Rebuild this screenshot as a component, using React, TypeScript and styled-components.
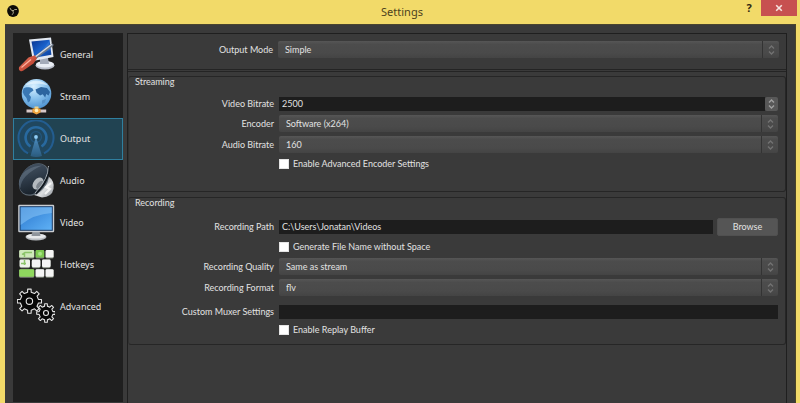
import React from "react";
import styled, { createGlobalStyle } from "styled-components";

const GlobalStyle = createGlobalStyle`
  * { box-sizing: border-box; }
  body { margin: 0; background: #f2da69; }
  button, input, select { font: inherit; color: inherit; margin: 0; }
`;

const Window = styled.div`
  display: flex;
  flex-direction: column;
  min-height: 100vh;
  background: #f2da69;
  color: #e2e2e2;
  font: 9px/14px Lato, "Noto Sans", sans-serif;
`;

const TitleBar = styled.header`
  display: grid;
  grid-template-columns: 1fr auto 1fr;
  height: 24px;
  padding: 0 3px 0 7px;
  color: #4d421d;
  font-family: "Noto Sans", sans-serif;
`;

const AppMark = styled.svg`
  width: 12px;
  height: 12px;
  margin-top: 5px;
`;

const Title = styled.h1`
  margin: 0;
  font-size: 11px;
  line-height: 24px;
  font-weight: 400;
`;

const WindowControls = styled.div`
  display: flex;
  justify-content: flex-end;
  align-items: flex-start;
`;

const HelpButton = styled.button`
  width: 24px;
  height: 16px;
  padding: 0;
  border: 0;
  background: none;
  color: #2f2811;
  font-size: 11px;
  line-height: 16px;
  font-weight: 700;
`;

const CloseButton = styled.button`
  display: flex;
  align-items: center;
  justify-content: center;
  width: 36px;
  height: 16px;
  padding: 0;
  border: 0;
  background: #c75050;
`;

const Body = styled.div`
  flex: 1;
  display: flex;
  gap: 4px;
  margin: 0 4px 0 5px;
  padding: 8px 8px 0;
  background: #3a3a3a;
  border-top: 1px solid #4a452f;
  border-right: 1px solid #4a4326;
`;

const Sidebar = styled.nav`
  width: 110px;
  margin-bottom: 1px;
  padding-top: 1px;
  background: #1f1f1f;
  font-family: "Noto Sans", sans-serif;
`;

const NavItem = styled.button<{ $active?: boolean }>`
  display: flex;
  align-items: center;
  gap: 5px;
  width: 100%;
  height: 42px;
  padding: 0 3px;
  border: 1px solid ${(p) => (p.$active ? "#2f7f9f" : "transparent")};
  background: ${(p) => (p.$active ? "#214352" : "none")};
  text-align: left;
`;

const NavIcon = styled.svg`
  flex: none;
  width: 38px;
  height: 38px;
`;

const Pane = styled.main`
  flex: 1;
  min-width: 0;
  border: 1px solid #1f1f1f;
  border-bottom: 0;
`;

const ModeBar = styled.section`
  padding: 7px 7px 11px 0;
  border-bottom: 3px double #242424;
`;

const Group = styled.fieldset<{ $tail: number }>`
  display: flex;
  flex-direction: column;
  gap: 4px;
  min-width: 0;
  margin: 5px 0 0;
  padding: 0 7px ${(p) => p.$tail}px 0;
  border: 1px solid #262626;
  border-left-color: #303030;
  border-radius: 3px;

  ${ModeBar} + & {
    margin-top: 4px;
  }

  & > legend {
    float: left;
    width: 100%;
    padding: 0 6px;
    margin-bottom: 6px;
    line-height: 10px;
  }
`;

const Row = styled.div<{ $spaced?: boolean }>`
  display: grid;
  grid-template-columns: 145px minmax(0, 1fr);
  align-items: center;
  column-gap: 5px;
  margin-top: ${(p) => (p.$spaced ? 5 : 0)}px;
`;

const Label = styled.label`
  text-align: right;
  white-space: nowrap;
`;

const Field = styled.div`
  display: flex;
  align-items: center;
  gap: 4px;
`;

const TextBox = styled.input`
  flex: 1;
  min-width: 0;
  height: 14px;
  padding: 0 3px;
  border: 0;
  background: #1d1d1d;
  outline: 0;
`;

const SelectFrame = styled.div`
  flex: 1;
  display: grid;
  height: 17px;
  border-radius: 2px;
  background: linear-gradient(#565656, #4c4c4c 20%, #4a4a4a 70%, #444444);

  & > * { grid-area: 1 / 1; }
`;

const Select = styled.select`
  appearance: none;
  width: 100%;
  height: 17px;
  padding: 0 20px 0 7px;
  border: 0;
  background: none;
  outline: 0;
`;

const SelectArrows = styled.span`
  display: flex;
  align-items: center;
  justify-content: center;
  justify-self: end;
  width: 17px;
  border-left: 1px solid #333333;
  pointer-events: none;
`;

const SpinButton = styled.button`
  display: flex;
  align-items: center;
  justify-content: center;
  width: 13px;
  height: 14px;
  padding: 0;
  border: 0;
  border-radius: 2px;
  background: #585858;
`;

const SpinField = styled(Field)`
  gap: 0;
`;

const BrowseButton = styled.button`
  width: 61px;
  height: 18px;
  padding: 0;
  border: 1px solid #505050;
  border-radius: 2px;
  background: #555555;
  line-height: 14px;
`;

const CheckLabel = styled.label`
  grid-column: 2;
  display: flex;
  align-items: center;
  gap: 4px;
  height: 14px;
`;

const CheckBox = styled.input`
  appearance: none;
  width: 10px;
  height: 10px;
  border: 1px solid #e4e4e4;
  background: #ffffff;

  &:checked { background: #2f7f9f; }
`;

function Arrows({ color }: { color: string }) {
  return (
    <svg width="7" height="12" viewBox="0 0 7 12" fill="none" stroke={color} strokeWidth="1.4">
      <path d="M1 4.5 3.5 2 6 4.5M1 7.5 3.5 10 6 7.5" />
    </svg>
  );
}

function SelectRow({ id, label, options }: { id: string; label: string; options: string[] }) {
  return (
    <Row>
      <Label htmlFor={id}>{label}</Label>
      <SelectFrame>
        <Select id={id} defaultValue={options[0]}>
          {options.map((o) => (
            <option key={o}>{o}</option>
          ))}
        </Select>
        <SelectArrows>
          <Arrows color="#727272" />
        </SelectArrows>
      </SelectFrame>
    </Row>
  );
}

function CheckRow({ label }: { label: string }) {
  return (
    <Row>
      <CheckLabel>
        <CheckBox type="checkbox" />
        {label}
      </CheckLabel>
    </Row>
  );
}

function GeneralIcon() {
  return (
    <NavIcon viewBox="0 0 38 38">
      <defs>
        <linearGradient id="gScreen" x1="0" y1="0" x2="1" y2="1">
          <stop offset="0" stopColor="#0a3490" />
          <stop offset=".5" stopColor="#1a62cc" />
          <stop offset="1" stopColor="#0b3c96" />
        </linearGradient>
        <linearGradient id="gHandle" x1="0" y1="0" x2="1" y2="1">
          <stop offset="0" stopColor="#f0806a" />
          <stop offset="1" stopColor="#a82a18" />
        </linearGradient>
      </defs>
      <ellipse cx="28" cy="29.5" rx="9.5" ry="4" fill="#b9bec9" />
      <ellipse cx="28" cy="28.3" rx="9" ry="3.2" fill="#e9edf4" />
      <path d="M23 22h8l1 6h-9z" fill="#a4abb9" />
      <path d="M12 3.5 34 1.5 36.5 21 16 25z" fill="#e3e9f2" />
      <path d="M14.5 5.5 32.5 3.7 34.4 18.7 17.5 21.8z" fill="url(#gScreen)" />
      <path d="M22 18 32 5.5 33.5 14z" fill="#4e95ea" opacity=".35" />
      <path d="M35 9 18.5 21.5" stroke="#6e7989" strokeWidth="3" strokeLinecap="round" />
      <path d="M34.5 8.6 18 21" stroke="#d7dde6" strokeWidth="1.3" strokeLinecap="round" />
      <path d="M2.2 31C1 33.5 3.2 36.4 6 34.8L16.5 27.5 20 22.5 17.8 19.2 11.5 21.5z" fill="url(#gHandle)" />
      <path d="M4.5 31.5 14 23.5" stroke="#ffb29f" strokeWidth="1.2" />
    </NavIcon>
  );
}

function StreamIcon() {
  return (
    <NavIcon viewBox="0 0 38 38">
      <defs>
        <radialGradient id="sGlobe" cx=".4" cy=".25" r=".8">
          <stop offset="0" stopColor="#d9f0ff" />
          <stop offset=".5" stopColor="#8cc4ee" />
          <stop offset="1" stopColor="#4a90cf" />
        </radialGradient>
      </defs>
      <circle cx="19.5" cy="15.7" r="14.8" fill="url(#sGlobe)" />
      <path d="M6.5 10.5C9 8.6 13 9 15.5 10.5L16.5 12.5l-3 2-1.5 2 2 2.5-1 4-2 1.5-1.5-4.5-2.5-3-1.4-3z" fill="#3a78b4" />
      <path d="M18.5 11.5 24 9l6 1 3 4-1.4 3.4-2.4-1.4-1 3.5-2.5-3.2-2.6 1.2-3.5-2.8z" fill="#2c659f" />
      <path d="M25 22.5 29 21l-1 3.6-3 1.4z" fill="#5590c6" />
      <path d="M8 7.5C13 1 26 1 31 7.5 24 5 15 5 8 7.5Z" fill="#f2faff" opacity=".6" />
      <path d="M17.5 28.5h4v4h-4z" fill="#ecd28b" />
      <path d="M9.5 31.4h6.2v3H9.5zM23.2 31.4h6v3h-6z" fill="#d8c8c8" />
      <path d="M15.5 30.6h8v4l-4 2-4-2z" fill="#f1a53f" />
      <circle cx="19.5" cy="32.5" r="1.8" fill="#fff1b8" />
    </NavIcon>
  );
}

function OutputIcon() {
  return (
    <NavIcon viewBox="0 0 38 38" fill="none">
      <defs>
        <linearGradient id="oCone" x1="0" y1="0" x2="0" y2="1">
          <stop offset="0" stopColor="#5aa0d8" />
          <stop offset="1" stopColor="#2f6590" />
        </linearGradient>
      </defs>
      <circle cx="19" cy="17.5" r="17" fill="#1f4f78" fillOpacity=".35" />
      <path d="M11 33.4A17.5 17.5 0 1 1 27 33.4" stroke="#235d90" strokeWidth="2" />
      <path d="M13.5 26.5A10.4 10.4 0 1 1 24.5 26.5" stroke="#28699f" strokeWidth="2.6" />
      <circle cx="19" cy="17" r="5.4" stroke="#22577f" strokeWidth="1.2" />
      <path d="M18.3 19h1.4L25 36Q19 38 13.5 36z" fill="url(#oCone)" opacity=".7" />
      <circle cx="19" cy="17" r="1.9" fill="#8fcdf6" />
    </NavIcon>
  );
}

function AudioIcon() {
  return (
    <NavIcon viewBox="0 0 38 38">
      <defs>
        <linearGradient id="aCone" x1="0" y1="0" x2="1" y2="1">
          <stop offset="0" stopColor="#4a5868" />
          <stop offset=".45" stopColor="#2f3c4a" />
          <stop offset="1" stopColor="#11181f" />
        </linearGradient>
        <linearGradient id="aBase" x1="0" y1="0" x2="1" y2="1">
          <stop offset="0" stopColor="#777f88" />
          <stop offset=".6" stopColor="#dcdee0" />
          <stop offset="1" stopColor="#858b92" />
        </linearGradient>
      </defs>
      <path d="M31 14Q38 19 36.5 27T25 35.5L17 33 22 21z" fill="url(#aBase)" />
      <ellipse cx="17" cy="17.5" rx="13" ry="18" transform="rotate(38 17 17.5)" fill="#5c6771" />
      <ellipse cx="16.4" cy="17" rx="12.2" ry="17.2" transform="rotate(38 16.4 17)" fill="url(#aCone)" />
      <path d="M3.5 26Q4 13 25 3.5 8 5 3 16 .5 22 3.5 26Z" fill="#8797a8" opacity=".35" />
      <ellipse cx="21" cy="21.5" rx="4.6" ry="6.8" transform="rotate(38 21 21.5)" fill="#b4babf" />
      <ellipse cx="23" cy="23" rx="2.8" ry="4.8" transform="rotate(38 23 23)" fill="#7d858d" />
      <path d="M31.5 4Q32 16 18 31" fill="none" stroke="#aab2ba" strokeWidth="1" />
      <path d="M32.4 5Q33 17 19 32" fill="none" stroke="#10161c" strokeWidth="1.6" />
      <path d="M34 21 29 25l4 2-5 5" fill="none" stroke="#ffffff" strokeWidth="2.2" opacity=".75" />
    </NavIcon>
  );
}

function VideoIcon() {
  return (
    <NavIcon viewBox="0 0 38 38">
      <defs>
        <linearGradient id="vScreen" x1="0" y1="0" x2="1" y2="1">
          <stop offset="0" stopColor="#2a77cf" />
          <stop offset="1" stopColor="#5fb1f5" />
        </linearGradient>
      </defs>
      <ellipse cx="19" cy="33" rx="10.5" ry="3.4" fill="#b8bcc1" />
      <ellipse cx="19" cy="32.2" rx="9.5" ry="2.4" fill="#e6e8ea" />
      <path d="M15.5 27h7l1 5h-9z" fill="#8e949b" />
      <rect x="1.2" y=".8" width="36" height="27.4" rx="1.2" fill="#c9ccd0" />
      <rect x="2.6" y="2.2" width="33.2" height="24.6" fill="#173b66" />
      <rect x="3.6" y="3.2" width="31.2" height="22.6" fill="url(#vScreen)" />
      <path d="M3.6 3.2h31.2V9Q17 10 3.6 21z" fill="#8fcaf8" opacity=".5" />
    </NavIcon>
  );
}

function HotkeysIcon() {
  const keys: [number, number, number, string][] = [
    [2.2, 4, 15, "#cfe9bb"], [18.6, 4, 8.6, "#7cc850"], [28.6, 4, 8, "#f4f4f4"],
    [2.6, 13.6, 10.4, "#eef3ea"], [14.8, 13.6, 8.6, "#f4f4f4"], [25, 13.6, 8.6, "#f4f4f4"],
    [2.2, 23.2, 15, "#8fd85e"], [18.6, 23.2, 8.6, "#f4f4f4"], [28.6, 23.2, 8, "#f4f4f4"],
  ];
  return (
    <NavIcon viewBox="0 0 38 38">
      {keys.map(([x, y, w, fill]) => (
        <g key={`${x}-${y}`}>
          <rect x={x} y={y} width={w} height="8.6" rx="1.4" fill="#7d8478" />
          <rect x={x} y={y} width={w} height="7.6" rx="1.4" fill={fill} />
        </g>
      ))}
      <path d="M5 8.5 8 6.5h7M7.5 11V7.5M7.5 14v5M4 17.5h5" fill="none" stroke="#8cc56a" strokeWidth="1.5" />
      <circle cx="23" cy="7.8" r="2" fill="#a7e584" />
    </NavIcon>
  );
}

function gearPath(cx: number, cy: number, outer: number, inner: number, teeth: number) {
  const step = (Math.PI * 2) / teeth;
  const points: string[] = [];
  for (let i = 0; i < teeth; i++) {
    const a = i * step - Math.PI / 2;
    for (const [r, d] of [[inner, -0.25], [outer, -0.18], [outer, 0.18], [inner, 0.25]]) {
      points.push(`${(cx + r * Math.cos(a + d * step)).toFixed(2)} ${(cy + r * Math.sin(a + d * step)).toFixed(2)}`);
    }
  }
  return `M${points.join("L")}Z`;
}

function AdvancedIcon() {
  return (
    <NavIcon viewBox="0 0 38 38" fill="#080808" stroke="#e6e6e6" strokeWidth="1.1" strokeLinejoin="round">
      <path d={gearPath(12.4, 13.2, 12.2, 9.2, 8)} />
      <circle cx="12.4" cy="13.2" r="3.2" />
      <path d={gearPath(29, 25, 9.4, 7, 8)} />
      <circle cx="29" cy="25" r="2.5" />
    </NavIcon>
  );
}

const sections = [
  { name: "General", Icon: GeneralIcon },
  { name: "Stream", Icon: StreamIcon },
  { name: "Output", Icon: OutputIcon },
  { name: "Audio", Icon: AudioIcon },
  { name: "Video", Icon: VideoIcon },
  { name: "Hotkeys", Icon: HotkeysIcon },
  { name: "Advanced", Icon: AdvancedIcon },
];

export default function App() {
  const [active, setActive] = React.useState("Output");
  return (
    <Window>
      <GlobalStyle />
      <TitleBar>
        <AppMark viewBox="0 0 12 12">
          <circle cx="6" cy="6" r="5.9" fill="#0c0b08" />
          <g fill="none" stroke="#a8a38a" strokeWidth="1" strokeLinecap="round">
            <path d="M3 3.2Q3.2 5.6 6 5.8" />
            <path d="M9.6 4.4Q7.4 3.8 6 5.8" />
            <path d="M5.4 9.6Q7.4 8.2 6 5.8" />
          </g>
        </AppMark>
        <Title>Settings</Title>
        <WindowControls>
          <HelpButton aria-label="Help">?</HelpButton>
          <CloseButton aria-label="Close">
            <svg width="8" height="8" viewBox="0 0 8 8" stroke="#f6e4e0" strokeWidth="1.6">
              <path d="M1.2 1.2 6.8 6.8M6.8 1.2 1.2 6.8" />
            </svg>
          </CloseButton>
        </WindowControls>
      </TitleBar>
      <Body>
        <Sidebar>
          {sections.map(({ name, Icon }) => (
            <NavItem key={name} $active={name === active} onClick={() => setActive(name)}>
              <Icon />
              {name}
            </NavItem>
          ))}
        </Sidebar>
        <Pane>
          <ModeBar>
            <SelectRow id="mode" label="Output Mode" options={["Simple", "Advanced"]} />
          </ModeBar>
          <Group $tail={20}>
            <legend>Streaming</legend>
            <Row>
              <Label htmlFor="video-bitrate">Video Bitrate</Label>
              <SpinField>
                <TextBox id="video-bitrate" defaultValue="2500" inputMode="numeric" />
                <SpinButton aria-label="Change video bitrate">
                  <Arrows color="#a0a0a0" />
                </SpinButton>
              </SpinField>
            </Row>
            <SelectRow id="encoder" label="Encoder" options={["Software (x264)"]} />
            <SelectRow id="audio-bitrate" label="Audio Bitrate" options={["160", "192", "320"]} />
            <CheckRow label="Enable Advanced Encoder Settings" />
          </Group>
          <Group $tail={7}>
            <legend>Recording</legend>
            <Row>
              <Label htmlFor="path">Recording Path</Label>
              <Field>
                <TextBox id="path" defaultValue="C:\Users\Jonatan\Videos" />
                <BrowseButton>Browse</BrowseButton>
              </Field>
            </Row>
            <CheckRow label="Generate File Name without Space" />
            <SelectRow id="quality" label="Recording Quality" options={["Same as stream"]} />
            <SelectRow id="format" label="Recording Format" options={["flv", "mp4", "mkv"]} />
            <Row $spaced>
              <Label htmlFor="muxer">Custom Muxer Settings</Label>
              <Field>
                <TextBox id="muxer" />
              </Field>
            </Row>
            <CheckRow label="Enable Replay Buffer" />
          </Group>
        </Pane>
      </Body>
    </Window>
  );
}
